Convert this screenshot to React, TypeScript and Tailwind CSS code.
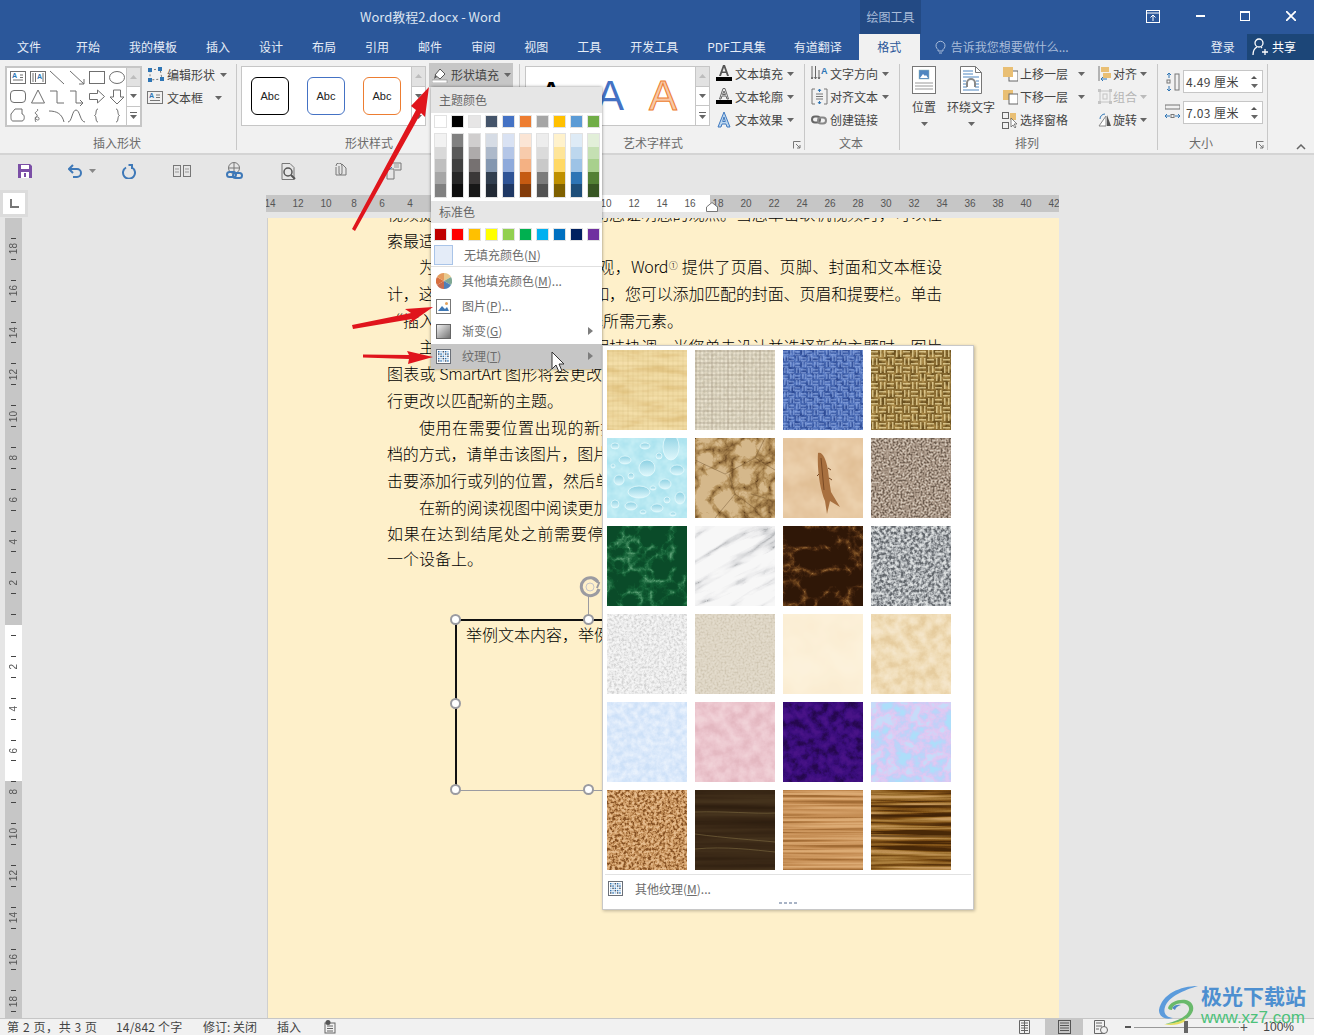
import type { ReactNode } from "react";

const tabs = [
  { label: "文件", ml: "ml-[17px]" },
  { label: "开始", ml: "ml-[35px]" },
  { label: "我的模板", ml: "ml-[29px]" },
  { label: "插入", ml: "ml-[29px]" },
  { label: "设计", ml: "ml-[29px]" },
  { label: "布局", ml: "ml-[29px]" },
  { label: "引用", ml: "ml-[29px]" },
  { label: "邮件", ml: "ml-[29px]" },
  { label: "审阅", ml: "ml-[29px]" },
  { label: "视图", ml: "ml-[29px]" },
  { label: "工具", ml: "ml-[29px]" },
  { label: "开发工具", ml: "ml-[29px]" },
  { label: "PDF工具集", ml: "ml-[29px]" },
  { label: "有道翻译", ml: "ml-[28px]" },
];

const themeTop = ["#ffffff", "#000000", "#e7e6e6", "#44546a", "#4472c4", "#ed7d31", "#a5a5a5", "#ffc000", "#5b9bd5", "#70ad47"];
const themeTints = [
  ["#f2f2f2", "#d9d9d9", "#bfbfbf", "#a6a6a6", "#808080"],
  ["#808080", "#595959", "#404040", "#262626", "#0d0d0d"],
  ["#d0cece", "#aeabab", "#767171", "#3b3838", "#171717"],
  ["#d6dce5", "#adb9ca", "#8497b0", "#323f4f", "#222a35"],
  ["#d9e2f3", "#b4c6e7", "#8eaadb", "#2f5496", "#1f3864"],
  ["#fbe5d5", "#f7cbac", "#f4b183", "#c55a11", "#833c0b"],
  ["#ededed", "#dbdbdb", "#c9c9c9", "#7b7b7b", "#525252"],
  ["#fff2cc", "#fee599", "#ffd966", "#bf9000", "#7f6000"],
  ["#deebf6", "#bdd7ee", "#9dc3e6", "#2e75b5", "#1e4e79"],
  ["#e2efd9", "#c5e0b3", "#a8d08d", "#538135", "#375623"],
];
const standard = ["#c00000", "#ff0000", "#ffc000", "#ffff00", "#92d050", "#00b050", "#00b0f0", "#0070c0", "#002060", "#7030a0"];

const docLines = [
  { t: "视频提供了功能强大的方法帮助您证明您的观点。当您单击联机视频时，可以在想", j: true },
  { t: "索最适合您的文档的视频。" },
  { t: "为使您的文档具有专业外观，Word", sup: true, t2: " 提供了页眉、页脚、封面和文本框设", j: true, i: true },
  { t: "计，这些设计可互为补充。例如，您可以添加匹配的封面、页眉和提要栏。单击", j: true },
  { t: "“插入”，然后从不同库中选择所需元素。" },
  { t: "主题和样式也有助于文档保持协调。当您单击设计并选择新的主题时，图片", j: true, i: true },
  { t: "图表或 SmartArt 图形将会更改以匹配新的主题。当应用样式时，您的标题会进", j: true },
  { t: "行更改以匹配新的主题。" },
  { t: "使用在需要位置出现的新按钮在 Word 中保存时间。若要更改图片适应文", j: true, i: true },
  { t: "档的方式，请单击该图片，图片旁边将会显示布局选项按钮。当处理表格时，单", j: true },
  { t: "击要添加行或列的位置，然后单击加号。" },
  { t: "在新的阅读视图中阅读更加容易。可以折叠文档某些部分并关注所需文本。", j: true, i: true },
  { t: "如果在达到结尾处之前需要停止读取，Word 会记住您的停止位置 - 即使在另", j: true },
  { t: "一个设备上。", last: true },
];

const Caret = ({ color = "#666" }: { color?: string }) => (
  <svg width="7" height="4" viewBox="0 0 7 4" className="shrink-0">
    <path d="M0 0h7L3.5 4z" fill={color} />
  </svg>
);

const Ico = ({ children, w = 16, h = 16, vb }: { children: ReactNode; w?: number; h?: number; vb?: string }) => (
  <svg width={w} height={h} viewBox={vb ?? `0 0 ${w} ${h}`} fill="none" className="shrink-0">
    {children}
  </svg>
);

const s = "#6f6f6f";
const shapes: ReactNode[] = [
  <><rect x="2.5" y="3.5" width="15" height="12" stroke={s} /><path d="M5 12h10M12 7h3M12 9.5h3" stroke={s} /><text x="4" y="10" fontSize="7" fill="#2e75b5" fontFamily="Liberation Sans" fontWeight="700">A</text></>,
  <><rect x="2.5" y="3.5" width="15" height="12" stroke={s} /><path d="M5 5v9M7.5 5v9M15 5v9" stroke={s} /><text x="9" y="11" fontSize="7" fill="#2e75b5" fontFamily="Liberation Sans" fontWeight="700">A</text></>,
  <path d="M3 3l14 13" stroke={s} />,
  <path d="M3 3l14 13M17 11v5h-5" stroke={s} />,
  <rect x="2.5" y="3.5" width="15" height="12" stroke={s} />,
  <ellipse cx="10" cy="9.5" rx="7.5" ry="6" stroke={s} />,
  <rect x="2.5" y="3.5" width="15" height="12" rx="3.5" stroke={s} />,
  <path d="M10 3L3.5 16h13z" stroke={s} />,
  <path d="M3 4h7v12h7" stroke={s} />,
  <path d="M3 4h6v12h7M13 13l3 3-3 3" stroke={s} />,
  <path d="M2.5 6.5h8V3l7 6.5-7 6.5v-3.500h-8z" stroke={s} />,
  <path d="M6.500 3h7v7h3.500l-7 7-7-7h3.500z" stroke={s} />,
  <path d="M3 8l4-5h7v5c3 0 3 7 0 7H5C2.500 15 3 11 3 8z" stroke={s} />,
  <path d="M9 3c3 2-4 3-1 5 4 2-3 3 0 5 3 3 4-1 2-2s-4 2-2 5" stroke={s} />,
  <path d="M2 5c8 0 13 3 15 11" stroke={s} />,
  <path d="M1 16C5 16 5 4 9 4s4 12 9 12" stroke={s} />,
  <path d="M11 3C8 3 10 9 7.500 9.500 10 10 8 16 11 16" stroke={s} />,
  <path d="M9 3c3 0 1 6 3.500 6.500C10 10 12 16 9 16" stroke={s} />,
];

const ShapeGallery = () => (
  <div className="flex h-[61px] w-[137px] border-2 border-[#c6c6c6] bg-white">
    <div className="grid w-[121px] grid-cols-6 pl-[1px]">
      {shapes.map((el, i) => (
        <svg key={i} width="20" height="19" viewBox="0 0 20 19" fill="none">
          {el}
        </svg>
      ))}
    </div>
    <GalleryScroll />
  </div>
);

const GalleryScroll = () => (
  <div className="flex w-[14px] flex-col border-l border-[#c6c6c6]">
    <div className="flex flex-1 items-center justify-center bg-[#e2e2e2]">
      <svg width="7" height="4" viewBox="0 0 7 4"><path d="M0 4h7L3.500 0z" fill="#bdbdbd" /></svg>
    </div>
    <div className="flex flex-1 items-center justify-center border-y border-[#c6c6c6] bg-white">
      <Caret />
    </div>
    <div className="flex flex-1 flex-col items-center justify-center gap-[2px] bg-white">
      <div className="h-[1px] w-[7px] bg-[#666]" />
      <Caret />
    </div>
  </div>
);

const Group = ({ w, label, lp, launcher, children }: { w: string; label: string; lp: string; launcher?: boolean; children: ReactNode }) => (
  <div className={`${w} relative my-[4px] flex h-[86px] shrink-0 flex-col border-r border-[#c8c8c8]`}>
    <div className="flex flex-1 pt-[2px]">{children}</div>
    <div className={`${lp} h-[16px] text-[12px] leading-[18px] text-[#6b6b6b]`}>{label}</div>
    {launcher && (
      <svg width="8" height="8" viewBox="0 0 8 8" className="absolute bottom-[1px] right-[3px]" fill="none">
        <path d="M.500.500h7M.500.500v7M3 3l4 4M7 4v3H4" stroke="#777" />
      </svg>
    )}
  </div>
);

const RibbonItem = ({ icon, label, w, gray, gap = "gap-[6px]" }: { icon: ReactNode; label: string; w: string; gray?: boolean; gap?: string }) => (
  <div className={`flex h-[23px] items-center ${gap} ${gray ? "text-[#b5b5b5]" : "text-[#444]"}`}>
    {icon}
    <span className={`${w} whitespace-nowrap text-[12px]`}>{label}</span>
    <Caret color={gray ? "#bbb" : "#666"} />
  </div>
);

const LetterA = ({ kind }: { kind: "fill" | "line" | "fx" }) => (
  <svg width="16" height="17" viewBox="0 0 16 17" fill="none" className="shrink-0">
    {kind === "fx" ? (
      <path d="M8 1L2 16h3l1-3h4l1 3h3zM8 6l1.300 4.500H6.700z" fill="#bcd6ee" stroke="#3f79c0" />
    ) : kind === "fill" ? (
      <>
        <path d="M7 0L3 11h2l1-3h4l1 3h2L9 0zM8 2.500L9.500 6.500h-3z" fill="#555" />
        <rect x="0" y="12" width="16" height="4" fill="#000" />
      </>
    ) : (
      <>
        <path d="M7 .5L3.500 11h1.500l1-3h4l1 3h1.500L9 .5zM8 3l1.500 3.500h-3z" stroke="#666" fill="#eee" />
        <rect x="0" y="12" width="16" height="4" fill="#000" />
      </>
    )}
  </svg>
);

const TextureIcon = () => (
  <svg width="15" height="15" viewBox="0 0 15 15">
    <rect x=".5" y=".5" width="14" height="14" fill="#fff" stroke="#6b7078" />
    {Array.from({ length: 25 }).map((_, i) => (
      <rect key={i} x={2 + (i % 5) * 2.300} y={2 + Math.floor(i / 5) * 2.300} width="1.500" height="1.500" fill={i % 3 === 0 ? "#2e75b5" : i % 3 === 1 ? "#9dc3e6" : "#44546a"} />
    ))}
  </svg>
);

const hex = (c: string) => [1, 3, 5].map((i) => parseInt(c.slice(i, i + 2), 16) / 255);

type TexProps = { id: string; f: string; oct?: number; seed?: number; colors: string[]; c?: number; m?: number; turb?: boolean; tf?: string; children?: ReactNode };

const Tex = ({ id, f, oct = 3, seed = 2, colors, c = 2.400, m = 0.5, turb, tf, children }: TexProps) => {
  const rgb = colors.map(hex);
  const table = (n: number) => rgb.map((v) => v[n].toFixed(3)).join(" ");
  const o = (0.5 - m * c).toFixed(3);
  return (
    <svg width="80" height="80" viewBox="0 0 80 80" className="block">
      <defs>
        <filter id={id} x="0" y="0" width="100%" height="100%" colorInterpolationFilters="sRGB">
          <feTurbulence type={turb ? "turbulence" : "fractalNoise"} baseFrequency={f} numOctaves={oct} seed={seed} />
          <feColorMatrix type="matrix" values={`${c} 0 0 0 ${o} ${c} 0 0 0 ${o} ${c} 0 0 0 ${o} 0 0 0 0 1`} />
          <feComponentTransfer>
            <feFuncR type="table" tableValues={table(0)} />
            <feFuncG type="table" tableValues={table(1)} />
            <feFuncB type="table" tableValues={table(2)} />
          </feComponentTransfer>
        </filter>
      </defs>
      {tf ? (
        <g transform={tf}>
          <rect x="-40" y="-40" width="160" height="160" filter={`url(#${id})`} />
        </g>
      ) : (
        <rect width="80" height="80" filter={`url(#${id})`} />
      )}
      {children}
    </svg>
  );
};

const Weave = ({ step, color, op }: { step: number; color: string; op: number }) => (
  <g stroke={color}>
    {Array.from({ length: Math.ceil(80 / step) }).map((_, i) => (
      <g key={i}>
        <path d={`M0 ${i * step + 1}H80`} strokeOpacity={op * (i % 3 === 0 ? 1 : 0.6)} />
        <path d={`M${i * step + 1} 0V80`} strokeOpacity={op * (i % 4 === 0 ? 1 : 0.6)} />
      </g>
    ))}
  </g>
);

// alternating over/under threads for the sacking and denim tiles
const Basket = ({ step, color, op }: { step: number; color: string; op: number }) => (
  <g fill={color} fillOpacity={op}>
    {Array.from({ length: Math.ceil(80 / step) * Math.ceil(80 / step) }).map((_, i) => {
      const n = Math.ceil(80 / step);
      const x = (i % n) * step;
      const y = Math.floor(i / n) * step;
      return (Math.floor(i / n) + i % n) % 2 === 0 ? (
        <g key={i}>
          <rect x={x} y={y + 1} width={step - 1} height={1.500} />
          <rect x={x} y={y + step / 2 + 1} width={step - 1} height={1.500} />
        </g>
      ) : (
        <g key={i}>
          <rect x={x + 1} y={y} width={1.500} height={step - 1} />
          <rect x={x + step / 2 + 1} y={y} width={1.500} height={step - 1} />
        </g>
      );
    })}
  </g>
);

const drops = [
  [64, 9, 8, 13], [40, 30, 8, 8], [18, 22, 6, 4], [32, 54, 11, 6], [58, 46, 6, 5], [12, 42, 5, 5], [70, 32, 7, 5], [24, 68, 6, 4], [50, 70, 6, 4], [73, 60, 5, 6], [38, 8, 5, 3], [8, 66, 4, 4], [60, 62, 3, 3], [46, 50, 3, 2], [8, 8, 4, 3], [24, 38, 3, 3], [66, 76, 3, 2], [52, 18, 3, 3], [6, 28, 2, 2], [36, 74, 3, 2],
];

const Textures = () => (
  <div className="grid grid-cols-[repeat(4,80px)] gap-x-[8px] gap-y-[8px]">
    <Tex id="t1" f="0.03 0.12" colors={["#e4c684", "#efd89f", "#f5e0aa"]} c={1.600}><Weave step={5} color="#b79556" op={0.2} /></Tex>
    <Tex id="t2" f="0.3" colors={["#d6cdb6", "#e4dcc8", "#ece5d3"]} c={1.600}><Weave step={4} color="#8f866f" op={0.5} /></Tex>
    <Tex id="t3" f="0.25" colors={["#2f4c96", "#4566b0", "#5f80c8"]} c={2}><Basket step={6} color="#a9c0f2" op={0.45} /></Tex>
    <Tex id="t4" f="0.2" colors={["#6a5020", "#8a6c32", "#ab8b4a"]} c={2}><Basket step={8} color="#f2dfa6" op={0.7} /></Tex>
    <Tex id="t5" f="0.1" colors={["#abe3ef", "#c6eff6"]} c={1.600}>
      <defs>
        <linearGradient id="dg" x1="0" y1="0" x2="0" y2="1">
          <stop offset="0" stopColor="#8cd0e2" />
          <stop offset="1" stopColor="#e0f8fc" />
        </linearGradient>
      </defs>
      {drops.map(([x, y, rx, ry], i) => (
        <ellipse key={i} cx={x} cy={y} rx={rx} ry={ry} fill="url(#dg)" stroke="#e4fafd" strokeWidth=".8" />
      ))}
    </Tex>
    <Tex id="t6" f="0.04" oct={4} turb seed={7} m={0.17} colors={["#5f3f1e", "#94703f", "#b8955f", "#d6b98c"]} c={2.800}>
      <path d="M0 22L30 36 60 20 80 32M20 80L40 56 62 72M40 56L34 36M60 20L70 0M56 56l14 4" stroke="#5a3c1c" strokeOpacity=".35" fill="none" />
    </Tex>
    <Tex id="t7" f="0.05" colors={["#e2c097", "#ecd0ac"]} c={1.800}>
      <path d="M35 15c4-2 8 5 10 17 1 9 2 16 3 22l9 15-10-6-3 13-2-13c-5-12-8-31-7-48z" fill="#a8703f" />
      <path d="M38 20l3 32M45 30l3 2M46 40l3 2M36 36l-2 2" stroke="#7a4a24" fill="none" />
    </Tex>
    <Tex id="t8" f="0.5" oct={2} colors={["#6b5c4f", "#a89686", "#d3c7b9"]} c={2.400} />
    <Tex id="t9" f="0.045" oct={5} turb seed={4} m={0.16} colors={["#7db892", "#3a8458", "#125f35", "#0b4c29"]} c={2.800} />
    <Tex id="t10" f="0.012 0.05" oct={4} turb seed={9} m={0.16} tf="rotate(-25 40 40)" colors={["#9fa2a5", "#d4d5d7", "#eeeeef", "#f7f7f7"]} c={3} />
    <Tex id="t11" f="0.045" oct={5} turb seed={5} m={0.16} colors={["#b08450", "#74491f", "#46260f", "#301808"]} c={2.800} />
    <Tex id="t12" f="0.33" oct={2} colors={["#62666b", "#a7abaf", "#dcdfe0"]} c={2.600} />
    <Tex id="t13" f="0.4" oct={3} colors={["#d4d4d4", "#ececec", "#f8f8f8"]} c={2} />
    <Tex id="t14" f="0.5" oct={3} colors={["#cfc6b2", "#ded6c5", "#e5decf"]} c={1.800} />
    <Tex id="t15" f="0.03" oct={3} colors={["#fbedd2", "#fdf2db"]} c={1.800} />
    <Tex id="t16" f="0.09" oct={4} colors={["#e6cc9e", "#f0dcb6", "#f5e6ca"]} c={1.800} />
    <Tex id="t17" f="0.16" oct={4} colors={["#cde1f8", "#dbe9fb", "#e9f2fd"]} c={1.800} />
    <Tex id="t18" f="0.09" oct={4} colors={["#e4b8c1", "#ecc6ce", "#f1d2d8"]} c={1.800} />
    <Tex id="t19" f="0.11" oct={5} colors={["#26084f", "#3a0d7c", "#4a1488"]} c={2} />
    <Tex id="t20" f="0.08" oct={4} seed={11} colors={["#aedefb", "#c3d0f8", "#e2c8f2", "#c7dcfa"]} c={2.400} />
    <Tex id="t21" f="0.36" oct={3} colors={["#875326", "#b9844e", "#d6a571", "#e6bd8e"]} c={2.600} />
    <Tex id="t22" f="0.004 0.14" oct={3} colors={["#2f1f10", "#3b2917", "#45331d"]} c={1.800}>
      <path d="M0 22C30 21 60 24 80 23M0 44C30 48 60 50 80 52M0 59C30 56 60 60 80 62" stroke="#75623c" strokeOpacity=".7" fill="none" />
    </Tex>
    <Tex id="t23" f="0.005 0.38" oct={3} colors={["#a36c35", "#c28a50", "#d09b63", "#dcab74"]} c={2.400} />
    <Tex id="t24" f="0.005 0.2" oct={4} seed={6} colors={["#4a2808", "#7f5016", "#a87c3a", "#c89a60"]} c={3}>
      <path d="M0 16H80M0 25H80M0 46H80" stroke="#3a1e06" strokeOpacity=".6" strokeWidth="1.500" />
    </Tex>
  </div>
);

const MenuRow = ({ icon, children, arrow, active }: { icon: ReactNode; children: ReactNode; arrow?: boolean; active?: boolean }) => (
  <div className={`flex h-[25px] items-center pl-[5px] pr-[9px] text-[12px] text-[#6d6d6d] ${active ? "bg-[#c6c6c6]" : ""}`}>
    <div className="flex w-[26px] shrink-0">{icon}</div>
    <div className="flex-1 whitespace-nowrap">{children}</div>
    {arrow && (
      <svg width="5" height="8" viewBox="0 0 5 8"><path d="M0 0l5 4-5 4z" fill="#7d7d7d" /></svg>
    )}
  </div>
);

const FillMenu = () => (
  <div className="absolute left-[431px] top-[87px] w-[171px] bg-white shadow-[0_0_3px_rgba(0,0,0,0.45)]">
    <div className="flex h-[26px] items-center bg-[#e6e6e6] pl-[8px] text-[12px] text-[#666]">主题颜色</div>
    <div className="mt-[2px] flex gap-[4px] pl-[3px]">
      {themeTop.map((c) => (
        <div key={c} className="h-[13px] w-[13px] border border-[#e2e2e2]" style={{ background: c }} />
      ))}
    </div>
    <div className="mt-[5px] flex gap-[4px] pl-[3px]">
      {themeTints.map((col, i) => (
        <div key={i} className="flex w-[13px] flex-col border border-[#e2e2e2]">
          {col.map((c) => (
            <div key={c} className="h-[12.600px]" style={{ background: c }} />
          ))}
        </div>
      ))}
    </div>
    <div className="mt-[3px] flex h-[22px] items-center bg-[#e6e6e6] pl-[8px] text-[12px] text-[#666]">标准色</div>
    <div className="mt-[5px] flex gap-[4px] pl-[3px]">
      {standard.map((c) => (
        <div key={c} className="h-[13px] w-[13px] border border-[#e2e2e2]" style={{ background: c }} />
      ))}
    </div>
    <div className="mt-[4px] flex h-[22px] items-center border-b border-[#e0e0e0] pl-[3px] text-[12px] text-[#6d6d6d]">
      <div className="mr-[11px] h-[20px] w-[19px] border border-[#a9c4e8] bg-[#e4ecf8]" />
      <span>无填充颜色(<u>N</u>)</span>
    </div>
    <div className="h-[1px]" />
    <div className="mt-[1px]">
      <MenuRow
        icon={
          <svg width="16" height="16" viewBox="0 0 16 16">
            <path d="M8 8V0a8 8 0 0 1 7 4z" fill="#e8c88c" />
            <path d="M8 8l7-4a8 8 0 0 1 0 8z" fill="#7fa894" />
            <path d="M8 8l7 4a8 8 0 0 1-7 4z" fill="#4f7fb8" />
            <path d="M8 8v8a8 8 0 0 1-7-4z" fill="#c66a4e" />
            <path d="M8 8l-7 4a8 8 0 0 1 0-8z" fill="#d86f3e" />
            <path d="M8 8L1 4a8 8 0 0 1 7-4z" fill="#e49a5c" />
          </svg>
        }
      >
        其他填充颜色(<u>M</u>)...
      </MenuRow>
      <MenuRow
        icon={
          <svg width="15" height="15" viewBox="0 0 15 15">
            <rect x=".5" y=".5" width="14" height="14" fill="#fff" stroke="#777" />
            <path d="M2 12l4-5 3 3 2-2 2 4z" fill="#3f78b5" />
            <circle cx="10.500" cy="4.500" r="1.500" fill="#e6a25a" />
          </svg>
        }
      >
        图片(<u>P</u>)...
      </MenuRow>
      <MenuRow
        arrow
        icon={
          <svg width="15" height="15" viewBox="0 0 15 15">
            <defs>
              <linearGradient id="grad" x1="0" y1="0" x2="1" y2="1">
                <stop offset="0" stopColor="#f4f4f4" />
                <stop offset="1" stopColor="#6e6e6e" />
              </linearGradient>
            </defs>
            <rect x=".5" y=".5" width="14" height="14" fill="url(#grad)" stroke="#666" />
          </svg>
        }
      >
        渐变(<u>G</u>)
      </MenuRow>
      <MenuRow arrow active icon={<TextureIcon />}>
        纹理(<u>T</u>)
      </MenuRow>
    </div>
  </div>
);

const TexturePanel = () => (
  <div className="absolute left-[602px] top-[345px] flex h-[565px] w-[372px] flex-col border border-[#c8c8c8] bg-white shadow-[1px_1px_3px_rgba(0,0,0,0.25)]">
    <div className="pl-[4px] pt-[4px]">
      <Textures />
    </div>
    <div className="mx-[2px] mt-[4px] border-t border-[#e2e2e2]" />
    <div className="flex h-[27px] items-center pl-[5px] text-[12px] text-[#6d6d6d]">
      <div className="mr-[12px] flex">
        <TextureIcon />
      </div>
      <span>其他纹理(<u>M</u>)...</span>
    </div>
    <div className="flex justify-center gap-[2px]">
      {[0, 1, 2, 3].map((i) => (
        <div key={i} className="h-[2px] w-[3px] bg-[#a9b4c6]" />
      ))}
    </div>
  </div>
);

const Handle = ({ pos }: { pos: string }) => (
  <div className={`absolute ${pos} h-[11px] w-[11px] rounded-full border-2 border-[#9b9ba1] bg-white`} />
);

const ShapeBox = () => (
  <div className="absolute left-[455px] top-[619px] h-[172px] w-[300px] border-l-2 border-t-2 border-[#111]">
    <div className="absolute bottom-0 left-0 h-[1.500px] w-full bg-[#9b9ba1]" />
    <div className="pl-[9px] text-[16px] font-light leading-[26px] text-black">举例文本内容，举例文本内容</div>
    <Handle pos="left-[-7px] top-[-7px]" />
    <Handle pos="left-[126px] top-[-7px]" />
    <Handle pos="left-[-7px] top-[77px]" />
    <Handle pos="left-[-7px] top-[163px]" />
    <Handle pos="left-[126px] top-[163px]" />
    <div className="absolute left-[131px] top-[-26px] h-[20px] w-[1px] bg-[#9b9ba1]" />
    <svg width="22" height="22" viewBox="0 0 22 22" fill="none" className="absolute left-[122px] top-[-45px]">
      <path d="M19 6A9 9 0 1 0 20 13" stroke="#9b9ba1" strokeWidth="3" />
      <path d="M14 3l6 4-2 5" stroke="#9b9ba1" strokeWidth="2" />
      <circle cx="11" cy="11" r="4" stroke="#c4c4c8" />
    </svg>
  </div>
);

const Arrows = () => (
  <svg width="1317" height="1035" viewBox="0 0 1317 1035" className="pointer-events-none absolute left-0 top-0">
    <path d="M429 87L411 106 416 110 352 229 355 231 421 113 425 117z" fill="#e0151c" />
    <path d="M352 325L353 329 412 319 409 324 433 307 405 309 411 313z" fill="#e0151c" />
    <path d="M363 354.500L363 357.500 409 359 408 364 433 357 407 351 409 355z" fill="#e0151c" />
    <path d="M552 352v17l4-4 3 7 3-1-3-7h5z" fill="#fff" stroke="#333" />
  </svg>
);

const Watermark = () => (
  <div className="absolute left-[1158px] top-[981px] flex items-start">
    <svg width="42" height="42" viewBox="0 0 42 42" fill="none" className="mt-[3px]">
      <path d="M40 2C22 2 4 10 1 26c0 8 8 10 14 8-7-1-10-5-8-11C10 13 26 6 40 2z" fill="#5b9bdc" />
      <path d="M10 24c2-6 10-9 18-8 8 2 10 10 3 17-5 4-14 7-24 7 8-2 22-6 24-14 1-6-6-8-12-6-3 1-5 3-5 6-2 0-4-1-4-2z" fill="#69b96b" />
      <path d="M6 40c8 0 16-2 22-6l-2 4c-6 3-14 4-20 2z" fill="#e4de5c" />
      <path d="M14 24c2-3 6-4 9-3-3 1-5 2-6 5z" fill="#4f88c6" />
    </svg>
    <div className="ml-[1px] flex flex-col">
      <span className="mt-[1px] whitespace-nowrap text-[21px] font-bold leading-[26px] text-[#4d8fd0]">极光下载站</span>
      <span className="whitespace-nowrap text-[17px] leading-[20px] text-[#4cc17a] [font-family:'Liberation_Sans',sans-serif]">www.xz7.com</span>
    </div>
  </div>
);

const SizeInput = ({ value, icon }: { value: string; icon: ReactNode }) => (
  <div className="flex h-[23px] items-center gap-[3px]">
    {icon}
    <div className="flex h-[23px] w-[80px] items-center justify-between border border-[#c6c6c6] bg-white pl-[2px] pr-[4px] text-[12px] text-[#444]">
      <span className="tracking-[0.4px]">{value} 厘米</span>
      <div className="flex flex-col gap-[5px]">
        <svg width="6" height="3" viewBox="0 0 6 3" className="block"><path d="M0 3h6L3 0z" fill="#555" /></svg>
        <Caret />
      </div>
    </div>
  </div>
);

const Ribbon = () => (
  <div className="flex h-[95px] shrink-0 border-b-2 border-[#d4d4d4] bg-[#f1f1f1]">
    <Group w="w-[237px]" label="插入形状" lp="pl-[93px]">
      <div className="ml-[5px] flex gap-[5px]">
        <ShapeGallery />
        <div className="-mt-[3px] flex flex-col gap-0">
          <div className="flex h-[23px] items-center gap-[3px] text-[12px] text-[#444]">
            <Ico w={17} h={15}>
              <path d="M3 3L13 2 15 12 3 13z" stroke="#777" strokeDasharray="2 2" />
              <rect x="1" y="1" width="4" height="4" fill="#2e75b5" /><rect x="11" y="0" width="4" height="4" fill="#2e75b5" /><rect x="1" y="11" width="4" height="4" fill="#2e75b5" /><rect x="13" y="10" width="4" height="4" fill="#2e75b5" />
            </Ico>
            <span className="w-[50px] whitespace-nowrap">编辑形状</span>
            <Caret />
          </div>
          <div className="flex h-[23px] items-center gap-[3px] text-[12px] text-[#444]">
            <Ico w={17} h={15}>
              <rect x=".5" y="1.500" width="15" height="12" stroke="#777" />
              <path d="M3 10.500h10M9 5h4M9 7.500h4" stroke="#777" />
              <text x="2" y="8" fontSize="7" fontWeight="700" fill="#2e75b5" fontFamily="Liberation Sans">A</text>
            </Ico>
            <span className="w-[45px] whitespace-nowrap">文本框</span>
            <Caret />
          </div>
        </div>
      </div>
    </Group>
    <Group w="w-[283px]" label="形状样式" lp="pl-[108px]">
      <div className="ml-[4px] flex h-[60px] w-[185px] border border-[#c6c6c6] bg-white">
        <div className="flex flex-1 items-center gap-[18px] pl-[9px]">
          {["border-black", "border-[#4472c4]", "border-[#ed7d31]"].map((b) => (
            <div key={b} className={`flex h-[38px] w-[38px] items-center justify-center rounded-[6px] border-[1.5px] ${b} bg-white text-[11px] text-[#222] [font-family:'Liberation_Sans',sans-serif]`}>
              Abc
            </div>
          ))}
        </div>
        <GalleryScroll />
      </div>
      <div className="-mt-[3px] ml-[3px]">
        <div className="flex h-[24px] w-[84px] items-center gap-[3px] bg-[#c6c6c6] pl-[3px] text-[12px] text-[#444]">
          <Ico w={16} h={16}>
            <path d="M3 8l5-6 5 5-5 5z" fill="#fff" stroke="#555" />
            <path d="M2 12l1-4 2 2z" fill="#555" />
            <rect x="0" y="13" width="15" height="3" fill="#fff" stroke="#888" strokeWidth=".6" />
          </Ico>
          <span className="w-[50px] whitespace-nowrap">形状填充</span>
          <Caret />
        </div>
      </div>
    </Group>
    <Group w="w-[285px]" label="艺术字样式" lp="pl-[103px]" launcher>
      <div className="ml-[5px] flex h-[60px] w-[185px] border border-[#c6c6c6] bg-white">
        <div className="flex flex-1 items-center overflow-hidden pl-[11px] text-[42px] font-normal leading-none [font-family:'Liberation_Sans',sans-serif]">
          <span className="mt-[2px] w-[53px] text-black">A</span>
          <span className="ml-[6px] w-[53px] text-[#4472c4]">A</span>
          <span className="text-[#f8c9a6] [-webkit-text-stroke:1px_#ed7d31]">A</span>
        </div>
        <GalleryScroll />
      </div>
      <div className="-mt-[4px] ml-[6px] flex flex-col">
        <RibbonItem icon={<LetterA kind="fill" />} label="文本填充" w="w-[49px]" gap="gap-[3px]" />
        <RibbonItem icon={<LetterA kind="line" />} label="文本轮廓" w="w-[49px]" gap="gap-[3px]" />
        <RibbonItem icon={<LetterA kind="fx" />} label="文本效果" w="w-[49px]" gap="gap-[3px]" />
      </div>
    </Group>
    <Group w="w-[95px]" label="文本" lp="pl-[34px]">
      <div className="-mt-[4px] ml-[6px] flex flex-col">
        <RibbonItem
          gap="gap-[2px]"
          w="w-[50px]"
          label="文字方向"
          icon={
            <Ico w={17} h={17}>
              <path d="M1 1v13M4.500 1v13M8 5v9M1 14l-1-2M1 14l1-2M4.500 14l-1-2M4.500 14l1-2M8 14l-1-2M8 14l1-2" stroke="#666" />
              <text x="10" y="9" fontSize="9" fontWeight="700" fill="#2e75b5" fontFamily="Liberation Sans">A</text>
            </Ico>
          }
        />
        <RibbonItem
          gap="gap-[2px]"
          w="w-[50px]"
          label="对齐文本"
          icon={
            <Ico w={17} h={17}>
              <path d="M4 1H1v15h3M13 1h3v15h-3M5 6h7M5 8.500h7M5 11h7" stroke="#777" />
              <path d="M8.500 1v3M8.500 13v3M7 3l1.500-2L10 3M7 14l1.500 2 1.500-2" stroke="#2e75b5" />
            </Ico>
          }
        />
        <div className="flex h-[23px] items-center gap-[3px] text-[12px] text-[#444]">
          <Ico w={16} h={10}>
            <rect x="1" y="1.500" width="8" height="6" rx="3" stroke="#666" strokeWidth="2" />
            <rect x="7" y="2.500" width="8" height="6" rx="3" stroke="#888" strokeWidth="2" />
          </Ico>
          <span>创建链接</span>
        </div>
      </div>
    </Group>
    <Group w="w-[258px]" label="排列" lp="pl-[115px]">
      <div className="ml-[12px] flex w-[24px] flex-col items-center">
        <Ico w={24} h={28}>
          <rect x=".5" y=".5" width="23" height="27" stroke="#777" fill="#fff" />
          <rect x="7" y="4" width="10" height="9" fill="#4f86c0" stroke="#9bb" strokeWidth=".5" />
          <path d="M8 12l3-4 2 2 1-1 2 3z" fill="#fff" />
          <path d="M3 17h18M3 20h18M3 23h18" stroke="#999" />
        </Ico>
        <span className="mt-[4px] whitespace-nowrap text-[12px] text-[#444]">位置</span>
        <div className="mt-[6px]"><Caret /></div>
      </div>
      <div className="ml-[11px] flex w-[48px] flex-col items-center">
        <Ico w={22} h={28}>
          <path d="M.5.5h15l6 6v21H.500z" stroke="#777" fill="#fff" />
          <path d="M15.500.5v6h6" stroke="#777" />
          <path d="M3 5h10M3 8h10M3 24h16M3 21h4M15 21h4M3 18h3M16 18h3M3 15h3M16 15h3M3 11h16" stroke="#4f86c0" />
          <path d="M7 21v-4a4 4 0 0 1 8 0v4" stroke="#888" strokeWidth="2" />
        </Ico>
        <span className="mt-[4px] whitespace-nowrap text-[12px] text-[#444]">环绕文字</span>
        <div className="mt-[6px]"><Caret /></div>
      </div>
      <div className="-mt-[4px] ml-[7px] flex w-[89px] flex-col">
        <RibbonItem
          gap="gap-[2px]"
          w="w-[56px]"
          label="上移一层"
          icon={<Ico w={16} h={16}><rect x="7" y="5" width="9" height="10" stroke="#666" fill="#fff" /><rect x="1" y="1" width="10" height="10" fill="#e9bf74" /></Ico>}
        />
        <RibbonItem
          gap="gap-[2px]"
          w="w-[56px]"
          label="下移一层"
          icon={<Ico w={16} h={16}><rect x="1" y="1" width="10" height="10" fill="#e9bf74" /><rect x="7" y="5" width="9" height="10" stroke="#666" fill="#fff" /></Ico>}
        />
        <div className="flex h-[23px] items-center gap-[2px] text-[12px] text-[#444]">
          <Ico w={16} h={18}>
            <rect x=".5" y="1.500" width="6" height="6" stroke="#666" /><rect x=".5" y="11.500" width="6" height="6" stroke="#666" />
            <rect x="8" y="2" width="6" height="7" fill="#e9bf74" />
            <path d="M9 7v9l2-2 2 3 1-1-2-3h3z" fill="#fff" stroke="#555" strokeWidth=".7" />
          </Ico>
          <span>选择窗格</span>
        </div>
      </div>
      <div className="-mt-[4px] ml-[7px] flex flex-col">
        <RibbonItem
          gap="gap-[1px]"
          w="w-[26px]"
          label="对齐"
          icon={<Ico w={14} h={17}><path d="M1 1v15" stroke="#777" /><rect x="3" y="2" width="8" height="5" fill="#e9bf74" /><rect x="5" y="8" width="8" height="5" fill="#e9bf74" /><path d="M9 14H3M5 12l-2 2 2 2" stroke="#2e75b5" /></Ico>}
        />
        <RibbonItem
          gray
          gap="gap-[1px]"
          w="w-[26px]"
          label="组合"
          icon={<Ico w={14} h={15}><rect x="2" y="2" width="10" height="11" stroke="#c4c4c4" /><rect x="0" y="0" width="3" height="3" fill="#c4c4c4" /><rect x="11" y="0" width="3" height="3" fill="#c4c4c4" /><rect x="0" y="12" width="3" height="3" fill="#c4c4c4" /><rect x="11" y="12" width="3" height="3" fill="#c4c4c4" /><rect x="5" y="5" width="4" height="5" stroke="#c4c4c4" /></Ico>}
        />
        <RibbonItem
          gap="gap-[1px]"
          w="w-[26px]"
          label="旋转"
          icon={<Ico w={14} h={16}><path d="M8 4L1 14h7z" stroke="#888" fill="#fff" /><path d="M9 3l4 11H9z" fill="#555" /><path d="M2 7a5 5 0 0 1 5-5" stroke="#2e75b5" /></Ico>}
        />
      </div>
    </Group>
    <Group w="w-[110px]" label="大小" lp="pl-[31px]" launcher>
      <div className="ml-[7px] mt-[4px] flex flex-col gap-[8px]">
        <SizeInput
          value="4.49"
          icon={
            <Ico w={15} h={20}>
              <rect x="10" y="2" width="4" height="16" stroke="#777" />
              <path d="M4 1v5M4 14v5M2 3l2-2 2 2M2 17l2 2 2-2" stroke="#2e75b5" />
              <rect x="2" y="8" width="3" height="3" stroke="#777" />
            </Ico>
          }
        />
        <SizeInput
          value="7.03"
          icon={
            <Ico w={15} h={20}>
              <rect x="0" y="2" width="15" height="4" stroke="#777" />
              <path d="M0 13h5M10 13h5M2 11l-2 2 2 2M13 11l2 2-2 2" stroke="#2e75b5" />
              <rect x="6" y="11.500" width="3" height="3" stroke="#777" />
            </Ico>
          }
        />
      </div>
    </Group>
    <div className="flex flex-1 items-end justify-end pb-[3px] pr-[8px]">
      <svg width="10" height="6" viewBox="0 0 10 6" fill="none"><path d="M1 5l4-4 4 4" stroke="#666" strokeWidth="1.500" /></svg>
    </div>
  </div>
);

const Toolbar = () => (
  <div className="flex h-[32px] shrink-0 items-center">
    <div className="ml-[18px] flex w-[50px]">
      <Ico w={14} h={14}>
        <path d="M0 0h12l2 2v12H0z" fill="#7b4fa6" /><rect x="3" y="1" width="8" height="4" fill="#fff" /><rect x="3" y="8" width="8" height="6" fill="#fff" /><rect x="6" y="9" width="2" height="4" fill="#7b4fa6" />
      </Ico>
    </div>
    <div className="flex w-[53px] items-center gap-[6px]">
      <Ico w={15} h={14}>
        <path d="M1 5h8a4 4 0 0 1 0 8H5" stroke="#3f79b8" strokeWidth="2" /><path d="M5 1L1 5l4 4" stroke="#3f79b8" strokeWidth="2" />
      </Ico>
      <Caret color="#888" />
    </div>
    <div className="flex w-[52px]">
      <Ico w={15} h={15}>
        <path d="M5 3.500a6 6 0 1 0 6 0" stroke="#3f79b8" strokeWidth="2" /><path d="M7.500 1H11v4" stroke="#3f79b8" strokeWidth="2" />
      </Ico>
    </div>
    <div className="flex w-[53px]">
      <Ico w={18} h={12}>
        <rect x=".5" y=".5" width="7" height="11" stroke="#777" /><rect x="10.500" y=".5" width="7" height="11" stroke="#777" /><path d="M2 4h4M2 7h4M12 4h4M12 7h4" stroke="#999" />
      </Ico>
    </div>
    <div className="flex w-[55px]">
      <Ico w={17} h={18}>
        <circle cx="8" cy="6" r="5.500" stroke="#777" /><path d="M3 6h10M8 1v10" stroke="#777" />
        <rect x="1" y="10" width="9" height="5" rx="2.500" stroke="#3f79b8" strokeWidth="2" /><rect x="7" y="11" width="9" height="5" rx="2.500" stroke="#3f79b8" strokeWidth="2" />
      </Ico>
    </div>
    <div className="flex w-[52px]">
      <Ico w={15} h={17}>
        <path d="M1 .5h8l4 4v12H1z" stroke="#777" /><circle cx="7" cy="9" r="4" stroke="#555" strokeWidth="1.500" /><path d="M10 12l4 4" stroke="#555" strokeWidth="2" />
      </Ico>
    </div>
    <div className="flex w-[53px]">
      <Ico w={16} h={16}>
        <path d="M3 4v8h10V5l-4-4" stroke="#777" /><path d="M6 3v7a1.500 1.500 0 0 0 3 0V3a3 3 0 0 0-6 0" stroke="#777" />
      </Ico>
    </div>
    <div className="flex">
      <Ico w={16} h={18}>
        <path d="M1 7h7v10H1z" stroke="#777" /><path d="M6 1h9v7H9" stroke="#777" /><path d="M8 3h5M8 5h5" stroke="#999" /><path d="M3 8l3-3" stroke="#3f79b8" />
      </Ico>
    </div>
  </div>
);

const hNums = [14, 12, 10, 8, 6, 4, 2, 0, 2, 4, 6, 8, 10, 12, 14, 16, 18, 20, 22, 24, 26, 28, 30, 32, 34, 36, 38, 40, 42];
const vNums = [18, 16, 14, 12, 10, 8, 6, 4, 2, 0, 2, 4, 6, 8, 10, 12, 14, 16, 18];

const HRuler = () => (
  <div className="relative ml-[238px] mt-[8px] flex h-[17px] w-[793px] overflow-hidden bg-[linear-gradient(to_right,#c6c6c6_199px,#ffffff_199px,#ffffff_444px,#c6c6c6_444px)] [font-family:'Liberation_Sans',sans-serif]">
    <div className="-ml-[10px] flex">
      {hNums.map((n, i) => (
        <div key={i} className="w-[28px] text-center text-[10px] leading-[17px] text-[#555]">{n === 0 ? "" : n}</div>
      ))}
    </div>
    <svg width="12" height="10" viewBox="0 0 12 10" className="absolute bottom-0 left-[440px]">
      <path d="M.5 9.500V5L6 .5 11.500 5v4.500z" fill="#fff" stroke="#777" />
    </svg>
  </div>
);

const VRuler = () => (
  <div className="ml-[5px] h-full w-[17px] overflow-hidden bg-[linear-gradient(to_bottom,#c6c6c6_407px,#ffffff_407px,#ffffff_563px,#c6c6c6_563px)] [font-family:'Liberation_Sans',sans-serif]">
    <div className="mt-[10px] flex flex-col">
      {vNums.map((n, i) => (
        <div key={i} className="flex h-[41.800px] flex-col items-center justify-between pb-[10px] pt-[10px]">
          <div className="h-[1px] w-[5px] bg-[#444]" />
          <span className="rotate-180 text-[10px] leading-[10px] text-[#555] [writing-mode:vertical-rl]">{n === 0 ? "" : n}</span>
          <div className="h-[1px] w-[5px] bg-[#444]" />
        </div>
      ))}
    </div>
  </div>
);

const Page = () => (
  <div className="ml-[245px] h-full w-[792px] overflow-hidden border-l border-[#cfcfcf] bg-[#fef0ca]">
    <div className="-mt-[18px] ml-[119px] w-[555px] text-[16px] font-light leading-[26.700px] text-black">
      {docLines.map((l, i) => (
        <div key={i} className={`h-[26.700px] overflow-hidden ${l.i ? "indent-[32px]" : ""} ${l.j ? "tracking-[-0.35px] [text-align-last:justify] text-justify" : ""} ${l.last ? "-mt-[2px]" : ""}`}>
          {l.t}
          {l.sup && <sup className="text-[9px] leading-none">①</sup>}
          {l.t2}
        </div>
      ))}
    </div>
  </div>
);

const StatusBar = () => (
  <div className="flex h-[17px] shrink-0 items-center border-t border-[#c6c6c6] bg-[#f1f1f1] text-[12px] leading-[16px] text-[#444]">
    <span className="ml-[7px] w-[109px] tracking-[0.6px]">第 2 页，共 3 页</span>
    <span className="w-[87px] tracking-[0.2px]">14/842 个字</span>
    <span className="w-[74px]">修订: 关闭</span>
    <span className="w-[47px]">插入</span>
    <Ico w={12} h={14}>
      <rect x="1" y="3" width="10" height="10" stroke="#666" /><path d="M3 6h6M3 8.500h6M3 11h6" stroke="#666" /><circle cx="4" cy="2.500" r="2.500" fill="#555" />
    </Ico>
    <div className="ml-auto flex h-full items-center">
      <Ico w={11} h={14}><path d="M.5.5h10v13H.500z" stroke="#666" /><path d="M2 3h7M2 5.500h7M2 8h7M2 10.500h7M5.500 1v12" stroke="#666" /></Ico>
      <div className="ml-[15px] flex h-full w-[38px] items-center justify-center bg-[#c6c6c6]">
        <Ico w={13} h={14}><rect x=".5" y=".5" width="12" height="13" stroke="#555" /><path d="M2 3h9M2 5.500h9M2 8h9M2 10.500h9" stroke="#555" /></Ico>
      </div>
      <div className="ml-[11px]">
        <Ico w={14} h={14}><path d="M.5.5h10v13H.500z" stroke="#666" /><path d="M2 3h6M2 6h6M2 9h3" stroke="#666" /><circle cx="10" cy="10" r="3.500" fill="#f1f1f1" stroke="#666" /></Ico>
      </div>
      <div className="ml-[17px] h-[2px] w-[6px] bg-[#555]" />
      <div className="relative ml-[3px] h-[1px] w-[105px] bg-[#999]">
        <div className="absolute left-[50px] top-[-6px] h-[12px] w-[4px] bg-[#666]" />
      </div>
      <span className="ml-[1px] w-[20px] text-[14px] leading-[14px] text-[#555]">+</span>
      <span className="mr-[20px] w-[34px] text-right [font-family:'Liberation_Sans',sans-serif]">100%</span>
    </div>
  </div>
);

export default function App() {
  return (
    <div className="relative h-[1035px] w-[1317px] overflow-hidden bg-white [font-family:'Noto_Sans_CJK_SC','Liberation_Sans',sans-serif]">
      <div className="flex h-full w-[1314px] flex-col bg-[#e6e6e6]">
        <div className="flex h-[34px] shrink-0 bg-[#2b579a] text-white">
          <div className="ml-[360px] w-[500px] pt-[8px] text-[13px] leading-[18px] text-[#dbe4f1]">Word教程2.docx - Word</div>
          <div className="flex h-[34px] w-[61px] items-center justify-center bg-[#234a84] text-[12px] text-[#a9bcd9]">绘图工具</div>
          <div className="ml-[225px] flex h-[32px] items-center">
            <Ico w={14} h={13}>
              <rect x=".5" y=".5" width="13" height="12" stroke="#fff" /><path d="M1 3h12" stroke="#fff" /><path d="M7 11V5M4.500 7.500L7 5l2.500 2.500" stroke="#fff" />
            </Ico>
            <div className="ml-[36px] h-[2px] w-[9px] bg-white" />
            <div className="ml-[35px] h-[10px] w-[10px] border border-t-[2px] border-white" />
            <svg width="10" height="10" viewBox="0 0 10 10" className="ml-[36px]"><path d="M0 0l10 10M10 0L0 10" stroke="#fff" strokeWidth="1.800" /></svg>
          </div>
        </div>
        <div className="flex h-[26px] shrink-0 items-center bg-[#2b579a] text-[12px] text-[#e6edf7]">
          {tabs.map((t) => (
            <span key={t.label} className={`${t.ml} whitespace-nowrap`}>{t.label}</span>
          ))}
          <div className="ml-[17px] flex h-full w-[61px] shrink-0 items-center justify-center bg-[#f1f1f1] text-[#2b579a]">格式</div>
          <svg width="11" height="14" viewBox="0 0 11 14" fill="none" className="ml-[15px] shrink-0">
            <path d="M3 9.500a4.500 4.500 0 1 1 5 0V11H3zM4 13h3" stroke="#a9bcd9" />
          </svg>
          <span className="ml-[5px] w-[258px] shrink-0 whitespace-nowrap text-[#a9bcd9]">告诉我您想要做什么...</span>
          <span className="ml-[2px] shrink-0 whitespace-nowrap">登录</span>
          <div className="ml-auto flex h-full w-[67px] shrink-0 items-center gap-[4px] bg-[#1c4678] pl-[5px]">
            <svg width="16" height="18" viewBox="0 0 16 18" fill="none">
              <circle cx="7" cy="5" r="4" stroke="#fff" strokeWidth="1.300" /><path d="M1 17c0-5 2-7 4-8M9 9l1 1M10 14h6M13 11v6" stroke="#fff" strokeWidth="1.300" />
            </svg>
            <span className="whitespace-nowrap text-white">共享</span>
          </div>
        </div>
        <Ribbon />
        <Toolbar />
        <div className="flex h-[31px] shrink-0">
          <div className="ml-0 mt-[3px] flex h-[27px] w-[28px] items-center justify-center bg-[#dcdcdc]">
            <div className="flex h-[21px] w-[22px] items-center justify-center bg-white">
              <svg width="9" height="9" viewBox="0 0 9 9" fill="none"><path d="M1 0v8h8" stroke="#777" strokeWidth="2" /></svg>
            </div>
          </div>
          <HRuler />
        </div>
        <div className="flex min-h-0 flex-1">
          <VRuler />
          <Page />
        </div>
        <StatusBar />
      </div>
      <ShapeBox />
      <FillMenu />
      <TexturePanel />
      <Watermark />
      <Arrows />
    </div>
  );
}
